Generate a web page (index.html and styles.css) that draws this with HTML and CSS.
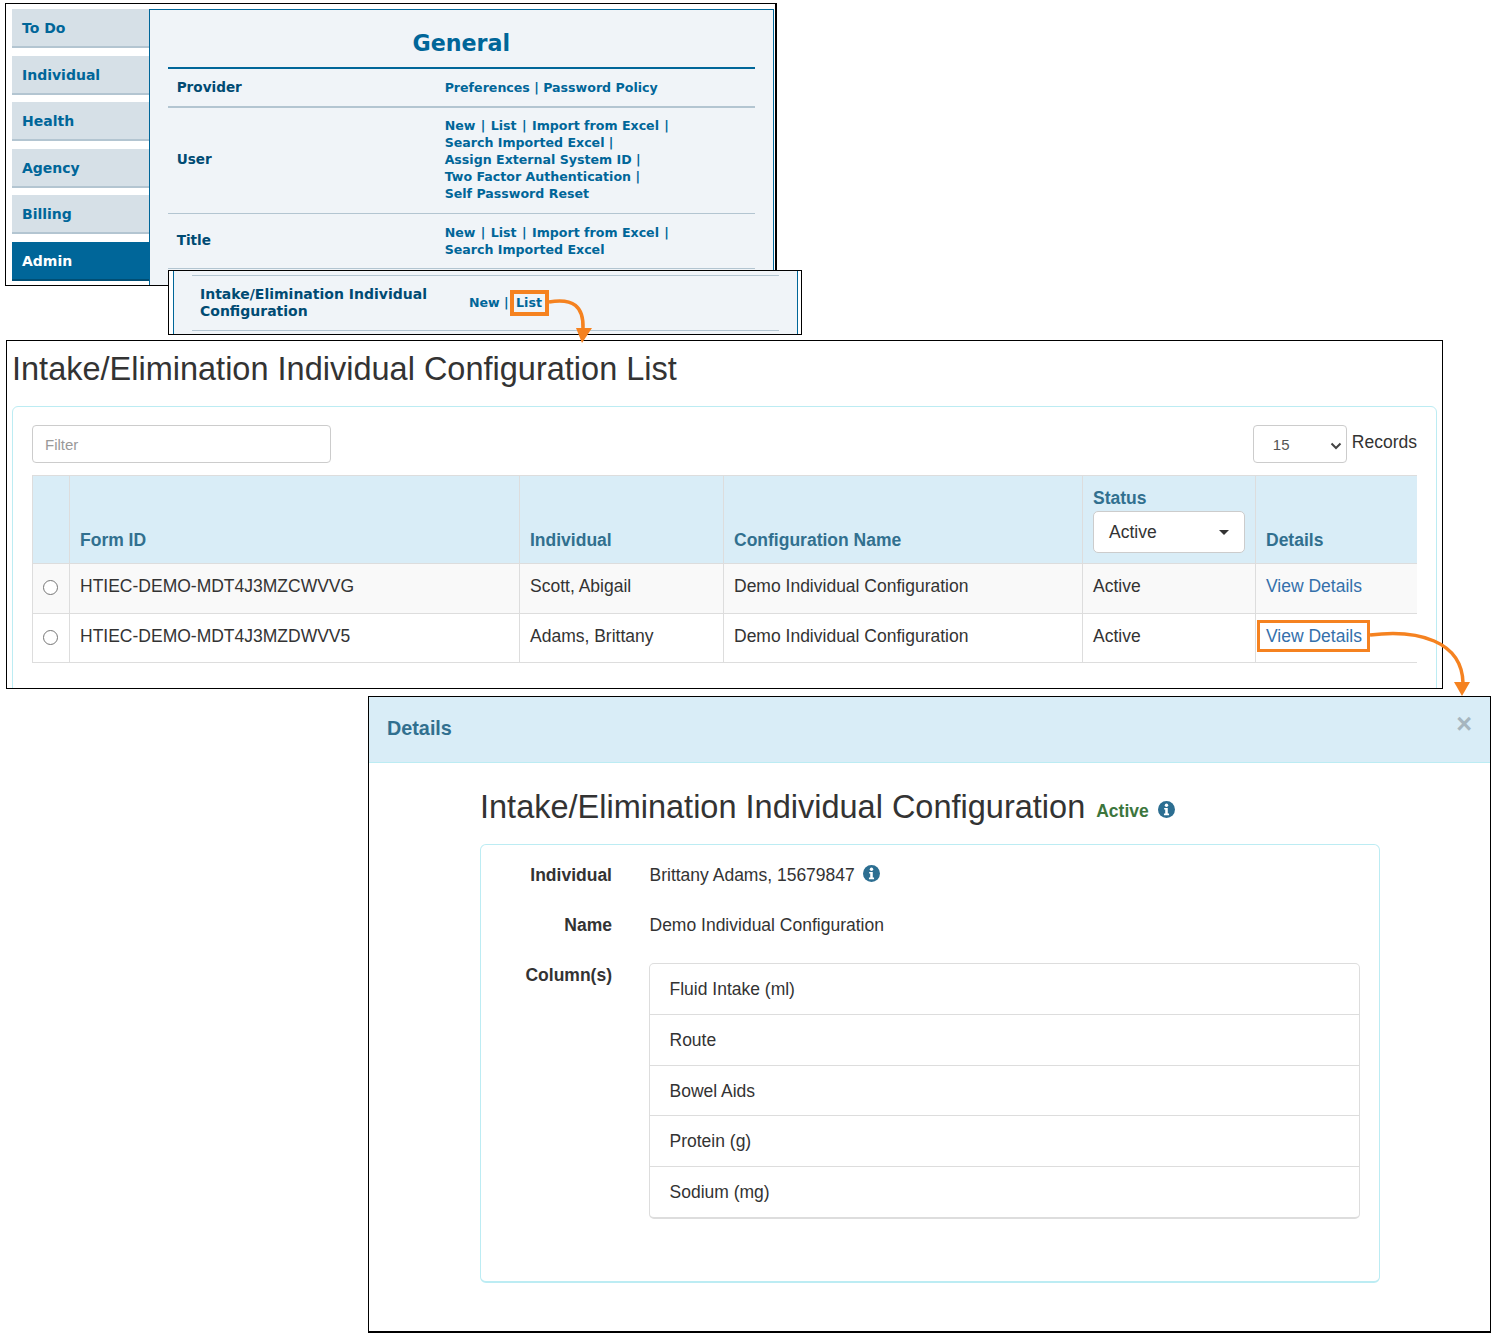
FILE: index.html
```html
<!DOCTYPE html>
<html lang="en">
<head>
<meta charset="utf-8">
<title>Intake/Elimination Individual Configuration</title>
<link rel="stylesheet" href="styles.css">
</head>
<body>
<div class="canvas">

  <section class="shot shot-menu">
    <nav class="tabs">
      <a class="tab">To Do</a>
      <a class="tab">Individual</a>
      <a class="tab">Health</a>
      <a class="tab">Agency</a>
      <a class="tab">Billing</a>
      <a class="tab tab-active">Admin</a>
    </nav>
    <div class="general">
      <h2 class="general-title">General</h2>
      <div class="menu-row row-provider">
        <div class="menu-label">Provider</div>
        <div class="menu-links">Preferences | Password Policy</div>
      </div>
      <div class="menu-row row-user">
        <div class="menu-label">User</div>
        <div class="menu-links">New <span class="sep">|</span> List <span class="sep">|</span> Import from Excel <span class="sep">|</span><br>Search Imported Excel |<br>Assign External System ID |<br>Two Factor Authentication |<br>Self Password Reset</div>
      </div>
      <div class="menu-row row-title">
        <div class="menu-label">Title</div>
        <div class="menu-links">New <span class="sep">|</span> List <span class="sep">|</span> Import from Excel <span class="sep">|</span><br>Search Imported Excel</div>
      </div>
    </div>
  </section>

  <section class="shot shot-intake">
    <div class="intake-inner">
      <div class="intake-row">
        <div class="intake-label">Intake/Elimination Individual Configuration</div>
        <div class="intake-links">New | <span class="list-link">List</span></div>
      </div>
    </div>
  </section>

  <section class="shot shot-list">
    <h1 class="list-title">Intake/Elimination Individual Configuration List</h1>
    <div class="card list-card">
      <div class="toolbar">
        <div class="filter">Filter</div>
        <div class="records">
          <div class="page-size">15
            <svg class="chev" viewBox="0 0 12 8" width="12" height="8"><path d="M1.5 1.5 6 6l4.500-4.500" fill="none" stroke="#444" stroke-width="2"/></svg>
          </div>
          <span class="records-label">Records</span>
        </div>
      </div>
      <table class="grid">
        <colgroup>
          <col class="c-radio"><col class="c-form"><col class="c-ind"><col class="c-conf"><col class="c-status"><col class="c-det">
        </colgroup>
        <thead>
          <tr>
            <th></th>
            <th>Form ID</th>
            <th>Individual</th>
            <th>Configuration Name</th>
            <th>
              <div class="status-head">Status</div>
              <div class="status-select">Active<span class="caret"></span></div>
            </th>
            <th>Details</th>
          </tr>
        </thead>
        <tbody>
          <tr class="odd">
            <td><span class="radio"></span></td>
            <td>HTIEC-DEMO-MDT4J3MZCWVVG</td>
            <td>Scott, Abigail</td>
            <td>Demo Individual Configuration</td>
            <td>Active</td>
            <td><a class="view">View Details</a></td>
          </tr>
          <tr class="even">
            <td><span class="radio"></span></td>
            <td>HTIEC-DEMO-MDT4J3MZDWVV5</td>
            <td>Adams, Brittany</td>
            <td>Demo Individual Configuration</td>
            <td>Active</td>
            <td><a class="view view-marked">View Details</a></td>
          </tr>
        </tbody>
      </table>
    </div>
  </section>

  <section class="shot shot-details">
    <header class="modal-head">
      <h3 class="modal-title">Details</h3>
      <span class="modal-close">×</span>
    </header>
    <div class="modal-body">
      <div class="detail-heading">
        <h2 class="detail-title">Intake/Elimination Individual Configuration</h2>
        <span class="detail-status">Active</span>
        <svg class="info info-status" viewBox="0 0 16 16" width="17" height="17"><circle cx="8" cy="8" r="8" fill="#2c6e91"/><circle cx="8" cy="4" r="1.600" fill="#fff"/><path d="M5.800 6.600h3.400v5.200h1.200v1.500H5.600v-1.500h1.200V8.100h-1z" fill="#fff"/></svg>
      </div>
      <div class="card detail-card">
        <div class="field">
          <div class="field-label">Individual</div>
          <div class="field-value">Brittany Adams, 15679847
            <svg class="info" viewBox="0 0 16 16" width="17" height="17"><circle cx="8" cy="8" r="8" fill="#2c6e91"/><circle cx="8" cy="4" r="1.600" fill="#fff"/><path d="M5.800 6.600h3.400v5.200h1.200v1.500H5.600v-1.500h1.200V8.100h-1z" fill="#fff"/></svg>
          </div>
        </div>
        <div class="field">
          <div class="field-label">Name</div>
          <div class="field-value">Demo Individual Configuration</div>
        </div>
        <div class="field">
          <div class="field-label">Column(s)</div>
          <ul class="columns">
            <li>Fluid Intake (ml)</li>
            <li>Route</li>
            <li>Bowel Aids</li>
            <li>Protein (g)</li>
            <li>Sodium (mg)</li>
          </ul>
        </div>
      </div>
    </div>
  </section>

  <svg class="arrow arrow-list" viewBox="0 0 50 50" width="50" height="50">
    <path d="M1 4C25 0 36 8 35 31" fill="none" stroke="#f58220" stroke-width="3.500"/>
    <path d="M28 30 44 30 34 45z" fill="#f58220"/>
  </svg>
  <svg class="arrow arrow-details" viewBox="0 0 100 70" width="100" height="70">
    <path d="M2 8C50 2 94 14 95 56" fill="none" stroke="#f58220" stroke-width="3.500"/>
    <path d="M86 55 102 55 94 69z" fill="#f58220"/>
  </svg>
</div>
</body>
</html>
```
FILE: styles.css
```css
* { box-sizing: border-box; }
html, body { margin: 0; padding: 0; background: #fff; }
body { font-family: "Liberation Sans", Arial, sans-serif; font-size: 17.500px; color: #333; }
.canvas { position: relative; width: 1496px; height: 1337px; overflow: hidden; }

.shot { position: absolute; background: #fff; border: 1px solid #000; }

/* Menu screenshot */
.shot-menu { left: 5px; top: 3px; width: 772px; height: 283px; display: flex; padding: 5px 1px 0 6px; border-width: 1px 2px 1px 1px; font-family: "DejaVu Sans", Verdana, sans-serif; font-weight: 700; font-size: 13px; }
.tabs { width: 137px; display: flex; flex-direction: column; gap: 7.500px; }
.tab { height: 39px; background: #d6e0e7; border-bottom: 2px solid #b3c5d1; color: #006699; font-size: 14px; padding: 11px 0 0 10px; line-height: 17px; }
.tab-active { background: #006699; color: #fff; border-bottom-color: #004d73; }
.general { width: 627px; height: 276px; background: #f0f4f8; border: 1px solid #006699; border-bottom: 0; padding: 0 18px; }
.general-title { margin: 0; height: 59px; border-bottom: 2px solid #006699; text-align: center; font-size: 22.200px; line-height: 24px; padding: 21px 0 0 0; color: #006699; }
.menu-row { display: flex; align-items: center; padding-left: 9px; color: #004b73; }
.row-provider { height: 39px; border-bottom: 2px solid #b3c5d1; }
.row-user { height: 106px; border-bottom: 1px solid #b3c5d1; }
.row-title { height: 55px; border-bottom: 1px solid #b3c5d1; }
.menu-label { width: 268px; font-size: 13.600px; color: #004b73; margin-top: -2px; }
.menu-links { color: #006699; font-size: 12.600px; line-height: 17px; }
.sep { margin: 0 1px; }
.row-user .menu-label { margin-top: -4px; }
.row-user .menu-links { margin-top: -2px; }

/* Intake row */
.shot-intake { left: 168px; top: 270px; width: 634px; height: 65px; padding: 0 3px 0 4px; font-family: "DejaVu Sans", Verdana, sans-serif; font-weight: 700; }
.intake-inner { height: 63px; background: #f0f4f8; border-left: 1px solid #006699; border-right: 1px solid #006699; padding: 4px 18px 3px; }
.intake-row { height: 56px; display: flex; align-items: center; border-top: 1px solid #b3c5d1; border-bottom: 1px solid #b3c5d1; padding-left: 8px; }
.intake-label { width: 269px; font-size: 14px; line-height: 17px; color: #004b73; }
.intake-links { color: #006699; font-size: 12.600px; }
.list-link { display: inline-block; line-height: 18px; outline: 4px solid #f58220; padding: 0 3px 0 2px; margin-left: 1px; }

/* List */
.shot-list { left: 6px; top: 340px; width: 1437px; height: 349px; overflow: hidden; padding: 0 5px; }
.list-title { margin: 0; padding-top: 8px; height: 65px; font-size: 32.500px; line-height: 40px; font-weight: 400; color: #333; }
.card { border: 1px solid #bcecf3; border-radius: 6px; background: #fff; }
.list-card { height: 300px; padding: 18px 19px; }
.toolbar { display: flex; justify-content: space-between; height: 50px; }
.filter { width: 299px; height: 38px; border: 1px solid #ccc; border-radius: 4px; color: #999; font-size: 15px; line-height: 37px; padding-left: 12px; }
.records { display: flex; gap: 5px; }
.page-size { position: relative; width: 94px; height: 38px; border: 1px solid #ccc; border-radius: 4px; color: #555; font-size: 15px; line-height: 37px; padding-left: 19px; }
.chev { position: absolute; right: 4px; top: 16px; }
.records-label { line-height: 34px; }
.grid { width: 1384px; border-collapse: collapse; table-layout: fixed; font-size: 17.500px; }
.c-radio { width: 37px; } .c-form { width: 450px; } .c-ind { width: 204px; } .c-conf { width: 359px; } .c-status { width: 173px; } .c-det { width: 161px; }
.grid th { background: #d9edf7; color: #31708f; font-weight: 700; text-align: left; vertical-align: bottom; padding: 0 10px 11px; height: 88px; border: 1px solid #ddd; line-height: 24px; }
.grid td { height: 50px; padding: 0 10px 6px; border: 1px solid #ddd; line-height: 24px; }
.grid .even td { height: 49px; padding-bottom: 4px; }
.grid th:last-child, .grid td:last-child { border-right: 0; }
.grid td:first-child { padding: 0 0 2px 10px; }
.grid th:nth-child(5) { padding-bottom: 10px; }
.odd td { background: #f9f9f9; }
.status-head { line-height: 24px; margin-bottom: 1px; }
.status-select { position: relative; width: 152px; height: 42px; background: #fff; border: 1px solid #ccc; border-radius: 5px; color: #333; font-weight: 400; line-height: 40px; padding-left: 15px; }
.caret { position: absolute; right: 15px; top: 18px; border-top: 5px solid #333; border-left: 5px solid transparent; border-right: 5px solid transparent; }
.radio { display: block; width: 15px; height: 15px; border: 1px solid #767676; border-radius: 50%; background: #fff; }
.view { color: #3470ab; }
.view-marked { display: inline-block; outline: 3px solid #f58220; padding: 1px 5px 1px 6px; margin-left: -6px; }

/* Details */
.shot-details { left: 368px; top: 696px; width: 1123px; height: 637px; border-bottom-width: 2px; }
.modal-head { position: relative; height: 66px; background: #d9edf7; border-bottom: 1px solid #bcecf3; padding: 0 18px 2px; display: flex; align-items: center; }
.modal-title { margin: 0; font-size: 19.800px; font-weight: 700; color: #31708f; }
.modal-close { position: absolute; right: 18px; top: 14px; color: #a6b6bf; font-size: 27px; font-weight: 700; line-height: 27px; }
.modal-body { padding: 0 110px 0 111px; }
.detail-heading { height: 81px; display: flex; align-items: center; gap: 12px; padding-top: 7px; }
.detail-title { margin: 0; font-size: 32.500px; font-weight: 400; color: #333; }
.detail-status { font-size: 17.500px; font-weight: 700; color: #3c763d; position: relative; top: 4px; margin-left: -1px; }
.info { vertical-align: -1px; margin-left: 3px; }
.info-status { margin-left: -3px; position: relative; top: 2px; }
.detail-card { height: 439px; padding: 9px 19px 0 0; border-bottom-width: 2px; }
.field { display: flex; min-height: 50px; line-height: 24px; }
.field-label { width: 131px; text-align: right; font-weight: 700; color: #333; padding-top: 9px; flex: none; }
.field-value { margin-left: 37.500px; padding-top: 9px; color: #333; }
.columns { list-style: none; margin: 9px 0 0 37px; padding: 0; flex: 1; border: 1px solid #ddd; border-bottom-width: 2px; border-radius: 5px; }
.columns li { height: 50.800px; padding: 13px 19.500px 0; border-bottom: 1px solid #ddd; line-height: 24px; }
.columns li:last-child { border-bottom: 0; height: 49.500px; }

/* Callout arrows */
.arrow { position: absolute; overflow: visible; pointer-events: none; }
.arrow-list { left: 548px; top: 298px; }
.arrow-details { left: 1368px; top: 627px; }
```
